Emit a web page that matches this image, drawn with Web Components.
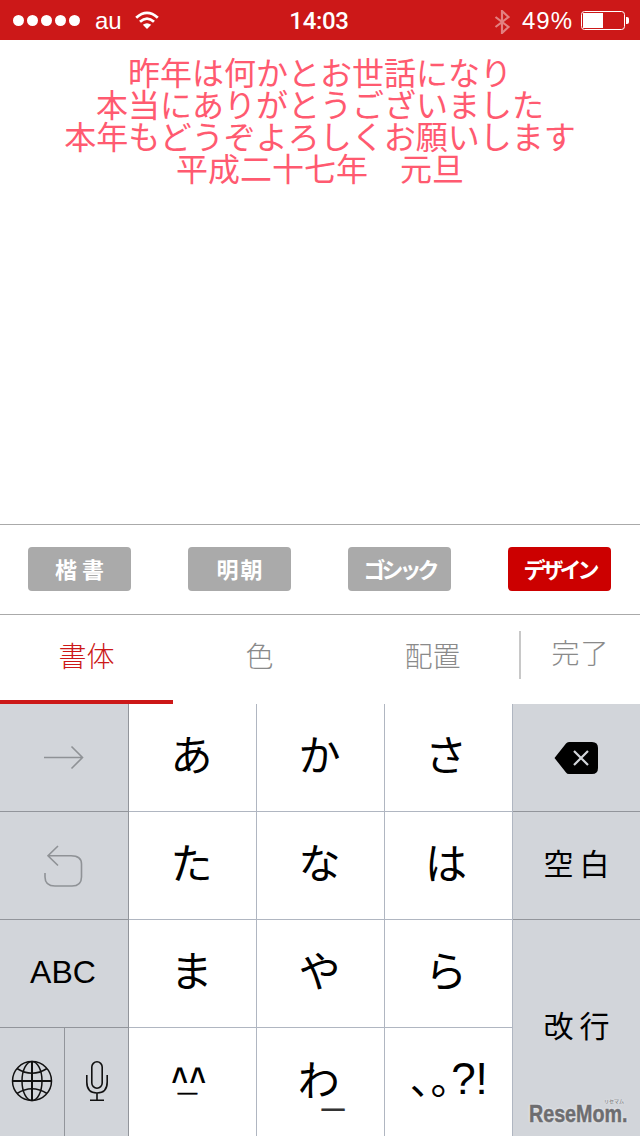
<!DOCTYPE html>
<html lang="ja">
<head>
<meta charset="utf-8">
<title>メッセージ</title>
<style>
html, body { margin: 0; padding: 0; background: #fff; }
body { width: 640px; height: 1136px; overflow: hidden; display: flex; flex-direction: column; position: relative; font-family: "Noto Sans CJK JP", "Liberation Sans", sans-serif; }
</style>
</head>
<body>
<status-bar></status-bar>
<message-view>昨年は何かとお世話になり<br>本当にありがとうございました<br>本年もどうぞよろしくお願いします<br>平成二十七年　元旦</message-view>
<font-picker>
  <font-button spaced>楷書</font-button>
  <font-button mid>明朝</font-button>
  <font-button tight>ゴシック</font-button>
  <font-button tight active>デザイン</font-button>
</font-picker>
<tab-bar>
  <tab-item active>書体</tab-item>
  <tab-item>色</tab-item>
  <tab-item>配置</tab-item>
  <done-button>完了</done-button>
</tab-bar>
<kana-keyboard>
  <kana-key fn>
    <svg width="40" height="25" viewBox="44 745 40 25" fill="none" stroke="#8f9296" stroke-width="1.6"><path d="M44 757.5H82M71.5 746.5 82.5 757.5 71.5 768.5"/></svg>
  </kana-key>
  <kana-key>あ</kana-key>
  <kana-key>か</kana-key>
  <kana-key nudge>さ</kana-key>
  <kana-key fn nr>
    <svg style="margin-right:2px" width="46" height="34" viewBox="553 740 46 34"><path d="M554.5 757 566 742.6Q567 741 569 741H592Q598 741 598 747V767Q598 773 592 773H569Q567 773 566 771.4Z" fill="#000"/><path d="M574 750 588 764M588 750 574 764" stroke="#d2d5da" stroke-width="2.2" fill="none"/></svg>
  </kana-key>
  <kana-key fn>
    <svg width="40" height="44" viewBox="44 844 40 44" fill="none" stroke="#8f9296" stroke-width="1.6"><path d="M58 846 48 855.7 58 865.5M48 855.7H71Q81.5 855.7 81.5 864V877Q81.5 886 72 886H55Q45 886 45 877V873"/></svg>
  </kana-key>
  <kana-key>た</kana-key>
  <kana-key>な</kana-key>
  <kana-key nudge>は</kana-key>
  <kana-key fn nr wide>空白</kana-key>
  <kana-key fn latin>ABC</kana-key>
  <kana-key>ま</kana-key>
  <kana-key>や</kana-key>
  <kana-key nudge>ら</kana-key>
  <kana-key fn nr nb wide tall>改行</kana-key>
  <kana-key fn split nb>
    <kana-key fn nb>
      <svg style="margin-bottom:3px" width="42" height="42" viewBox="11 1059 42 42" fill="none" stroke="#111" stroke-width="1.5"><circle cx="32" cy="1080" r="19.5"/><ellipse cx="32" cy="1080" rx="10" ry="19.5"/><path d="M32 1060.5V1099.5" stroke-width="2"/><path d="M12.5 1080H51.5" stroke-width="2"/><path d="M17 1067.5Q32 1077 47 1067.5M17 1092.5Q32 1083 47 1092.5"/></svg>
    </kana-key>
    <kana-key fn nr nb>
      <svg style="margin-bottom:3px" width="24" height="42" viewBox="84 1059 24 42" fill="none" stroke="#111" stroke-width="1.6"><rect x="90.8" y="1060.8" width="10.4" height="26.4" rx="5.2"/><path d="M85.8 1074V1081Q85.8 1092 96 1092Q106.2 1092 106.2 1081V1074M96 1092V1099M89 1099.2H103"/></svg>
    </kana-key>
  </kana-key>
  <kana-key nb><kaomoji-label></kaomoji-label></kana-key>
  <kana-key nb style="padding-left:3px">わ<small-bar>_</small-bar></kana-key>
  <kana-key nb><punct-label></punct-label></kana-key>
</kana-keyboard>
<rese-mark></rese-mark>

<script>
class Component extends HTMLElement {
    constructor(style, template) {
        super();
        let root = this.attachShadow({ mode: "open" });
        root.innerHTML = `<style>${style}</style>${template}`;
    }
}

class StatusBar extends Component {
    constructor() {
        super(`
        :host { display: grid; grid-template-columns: 1fr auto 1fr; align-items: center; height: 40px; flex: none; background: #cc1818; color: #fff; font: 24px "Liberation Sans", sans-serif; }
        .left, .right { display: flex; align-items: center; }
        .left { padding-left: 13px; }
        .dots { display: flex; gap: 3px; }
        .dots i { width: 11px; height: 11px; border-radius: 50%; background: #fff; }
        .carrier { margin: 2px 0 0 15px; }
        .wifi { margin-left: 13px; }
        .time { font-family: Roboto, sans-serif; font-weight: 500; margin: 2px 2px 0 0; letter-spacing: -.3px; }
        .right { justify-content: flex-end; padding-right: 11px; }
        .pct { margin: 2px 8px 0 12px; letter-spacing: 1px; }
        .bt { opacity: .45; margin-top: 3px; }
        .batt { width: 44px; height: 19px; margin-top: 1px; box-sizing: border-box; border: 1px solid #fff; border-radius: 3.5px; padding: 1px; }
        .batt b { display: block; width: 20px; height: 100%; background: #fff; }
        .nub { width: 3px; height: 7px; margin: 1px 0 0 1px; background: #fff; border-radius: 0 2px 2px 0; }
        `, `
        <div class="left">
          <div class="dots"><i></i><i></i><i></i><i></i><i></i></div>
          <span class="carrier">au</span>
          <svg class="wifi" width="24" height="18" viewBox="0 0 24 18" fill="none" stroke="#fff" stroke-width="2.8"><path d="M1.2 6.800Q12-3 22.800 6.800M5 10.800Q12 4.500 19 10.800"/><path d="M7.800 13.800Q12 10.800 16.200 13.800L12 18Z" fill="#fff" stroke="none"/></svg>
        </div>
        <span class="time">14:03</span>
        <div class="right">
          <svg class="bt" width="16" height="24" viewBox="0 0 16 24" fill="none" stroke="#fff" stroke-width="2.2"><path d="M1.500 7 14.500 17 8 23V1L14.500 7 1.500 17"/></svg>
          <span class="pct">49%</span>
          <div class="batt"><b></b></div><div class="nub"></div>
        </div>`);
    }
}

class MessageView extends Component {
    constructor() {
        super(`
        :host { display: block; flex: none; height: 484px; box-sizing: border-box; padding-top: 15px; text-align: center; white-space: nowrap; color: #ff5a70; font: 32px/32px "Noto Sans CJK JP", sans-serif; }
        `, `<slot></slot>`);
    }
}

class FontPicker extends Component {
    constructor() {
        super(`
        :host { display: flex; flex: none; justify-content: space-between; align-items: flex-start; height: 91px; box-sizing: border-box; padding: 22px 29px 0 28px; border-top: 1px solid #aaa; border-bottom: 1px solid #aaa; }
        `, `<slot></slot>`);
    }
}

class FontButton extends Component {
    constructor() {
        super(`
        :host { display: flex; align-items: center; justify-content: center; width: 103px; height: 44px; box-sizing: border-box; padding-bottom: 3px; border-radius: 4px; background: #aaa; color: #fff; font: 700 22px "Noto Sans CJK JP", sans-serif; white-space: nowrap; }
        :host([active]) { background: #cc0000; }
        :host([spaced]) { letter-spacing: 5px; text-indent: 5px; }
        :host([mid]) { letter-spacing: 2px; text-indent: 2px; }
        :host([tight]) { letter-spacing: -4px; }
        `, `<slot></slot>`);
    }
}

class TabBar extends Component {
    constructor() {
        super(`
        :host { display: flex; flex: none; height: 89px; }
        `, `<slot></slot>`);
    }
}

class TabItem extends Component {
    constructor() {
        super(`
        :host { display: flex; flex: 0 0 173px; align-items: center; justify-content: center; box-sizing: border-box; border-bottom: 4px solid transparent; padding-bottom: 6px; color: #8a8a8a; font: 300 28px "Noto Sans CJK JP", sans-serif; }
        :host([active]) { color: #cc1818; border-bottom-color: #cc1818; }
        `, `<slot></slot>`);
    }
}

class DoneButton extends Component {
    constructor() {
        super(`
        :host { display: flex; flex: 1; align-self: flex-start; align-items: center; justify-content: center; height: 48px; margin: 16px 0 0 0; border-left: 2px solid #c8c8c8; color: #8a8a8a; font: 300 28px "Noto Sans CJK JP", sans-serif; letter-spacing: 1px; padding-bottom: 6px; box-sizing: border-box; }
        `, `<slot></slot>`);
    }
}

class KanaKeyboard extends Component {
    constructor() {
        super(`
        :host { display: grid; flex: none; grid-template-columns: 129px 128px 128px 128px 127px; grid-template-rows: repeat(4, 108px); }
        `, `<slot></slot>`);
    }
}

class KanaKey extends Component {
    constructor() {
        super(`
        :host { display: flex; align-items: center; justify-content: center; box-sizing: border-box; background: #fff; color: #000; border-right: 1px solid #b0b6c1; border-bottom: 1px solid #b0b6c1; font: 42px "Noto Sans CJK JP", sans-serif; padding: 0 2px 10px 0; white-space: nowrap; }
        :host([nudge]) { padding-right: 5px; }
        :host([fn]) { background: #d2d5da; border-color: #92959b; padding: 0; }
        :host([nr]) { border-right: 0; }
        :host([nb]) { border-bottom: 0; }
        :host([wide]) { font-size: 30px; letter-spacing: 6px; text-indent: 6px; padding-bottom: 8px; }
        :host([tall]) { grid-row: span 2; }
        :host([latin]) { font: 32px "Liberation Sans", sans-serif; padding: 0 2px 2px 0; }
        :host([split]) { display: grid; align-items: stretch; justify-content: stretch; grid-template-columns: 65px 63px; }
        `, `<slot></slot>`);
    }
}

class SmallBar extends Component {
    constructor() {
        super(`
        :host { display: inline-block; margin-left: -18px; color: #333; font: 40px "Liberation Sans", sans-serif; transform: translateY(12px); }
        `, `<slot></slot>`);
    }
}

class KaomojiLabel extends Component {
    constructor() {
        super(`
        :host { display: block; position: relative; width: 36px; height: 36px; margin: 8px 0 0 -4px; font: 700 28px/28px "Liberation Sans", sans-serif; letter-spacing: 1.600px; }
        .caret { display: inline-block; transform: scaleY(1.25); transform-origin: 0 0; }
        .bar { position: absolute; left: 6.500px; top: -2px; font: 700 34px/34px "Liberation Sans", sans-serif; -webkit-text-stroke: .5px #000; letter-spacing: 0; }
        `, `<span class="caret">^^</span><span class="bar">_</span>`);
    }
}

class PunctLabel extends Component {
    constructor() {
        super(`
        :host { display: inline-flex; align-items: baseline; margin-left: 3px; }
        .kana { font: 40px "Noto Sans CJK JP", sans-serif; font-feature-settings: "palt"; margin-right: 1px; }
        .mark { font: 44px "Liberation Sans", sans-serif; }
        `, `<span class="kana">、。</span><span class="mark">?!</span>`);
    }
}

class ReseMark extends Component {
    constructor() {
        super(`
        :host { position: absolute; left: 529px; top: 1100px; width: 98px; height: 28px; color: #6d6d70; font: 700 24px/28px "Liberation Sans", sans-serif; -webkit-text-stroke: .5px #6d6d70; text-shadow: 0 0 3px #fff; white-space: nowrap; }
        .name { display: inline-block; transform: scaleX(.82); transform-origin: 0 50%; }
        .kana { position: absolute; right: 3px; top: -3px; font: 5px/7px "Noto Sans CJK JP", sans-serif; -webkit-text-stroke: 0; }
        `, `<span class="name">ReseMom.</span><span class="kana">リセマム</span>`);
    }
}

customElements.define("status-bar", StatusBar);
customElements.define("message-view", MessageView);
customElements.define("font-picker", FontPicker);
customElements.define("font-button", FontButton);
customElements.define("tab-bar", TabBar);
customElements.define("tab-item", TabItem);
customElements.define("done-button", DoneButton);
customElements.define("kana-keyboard", KanaKeyboard);
customElements.define("kana-key", KanaKey);
customElements.define("small-bar", SmallBar);
customElements.define("kaomoji-label", KaomojiLabel);
customElements.define("punct-label", PunctLabel);
customElements.define("rese-mark", ReseMark);
</script>
</body>
</html>
